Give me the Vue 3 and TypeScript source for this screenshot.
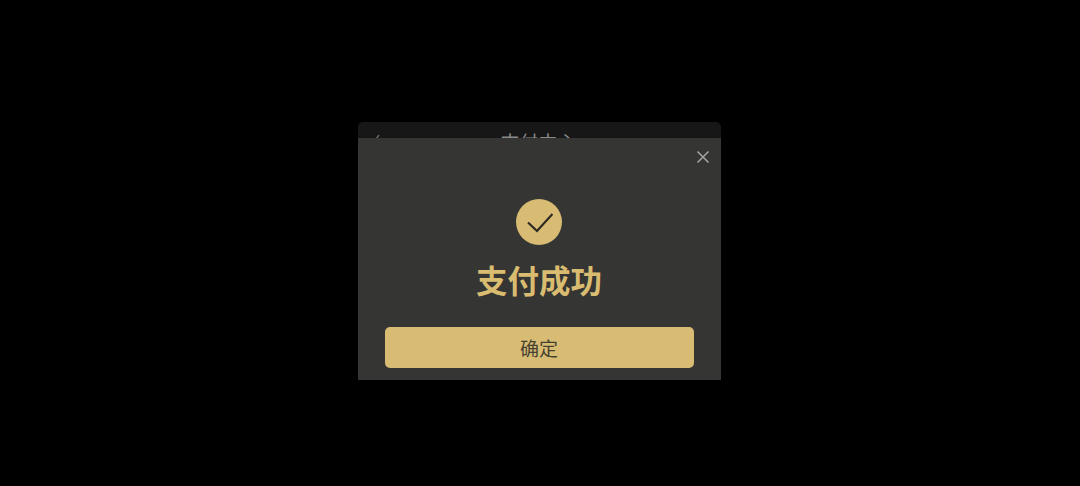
<script setup lang="ts">
const title: string = '支付成功'
</script>

<template>
  <div class="page">
    <div class="frame">
      <div class="nav">
        <svg class="back" width="12" height="24" viewBox="0 0 12 24"><path d="M8 7 L2 15 L8 23" fill="none" stroke="#6a6a6a" stroke-width="1.4" /></svg>
        <span class="nav-title">支付中心</span>
      </div>
      <div class="modal">
        <div class="close-row">
          <svg width="14" height="14" viewBox="0 0 14 14"><path d="M1.5 1.5 L12.5 12.5 M12.5 1.5 L1.5 12.5" stroke="#a6a6a4" stroke-width="1.5" fill="none" /></svg>
        </div>
        <div class="badge">
          <svg width="28" height="22" viewBox="0 0 28 22"><path d="M3 11.5 L12 20 L27.5 3" fill="none" stroke="#2d2a22" stroke-width="2.2" /></svg>
        </div>
        <div class="title">{{ title }}</div>
        <button class="confirm">确定</button>
      </div>
    </div>
  </div>
</template>

<style>
html, body { margin: 0; background: #000; }
</style>

<style scoped>
.page {
  width: 1080px;
  height: 486px;
  background: #000;
  padding: 122px 0 0 358px;
  box-sizing: border-box;
  font-family: "Liberation Sans", "Noto Sans CJK SC", sans-serif;
  overflow: hidden;
}
.frame {
  width: 363px;
  height: 258px;
  position: relative;
  overflow: hidden;
  border-radius: 5px 5px 0 0;
  background: #171717;
}
.nav {
  height: 40px;
  position: relative;
  display: flex;
  justify-content: center;
  align-items: flex-start;
  padding-top: 10px;
  box-sizing: border-box;
}
.back { position: absolute; left: 13px; top: 6px; }
.nav-title { font-size: 19px; line-height: 24px; color: #8a8a8a; margin-left: -2px; }
.modal {
  position: absolute;
  left: 0;
  right: 0;
  top: 16px;
  bottom: 0;
  background: #353534;
  display: flex;
  flex-direction: column;
  align-items: center;
}
.close-row {
  align-self: flex-end;
  padding: 12px 11px 0 0;
  height: 14px;
  display: flex;
}
.badge {
  width: 46px;
  height: 46px;
  margin-top: 35px;
  margin-left: -1px;
  border-radius: 50%;
  background: #d8bc74;
  display: flex;
  align-items: center;
  justify-content: center;
}
.title {
  margin-top: 17px;
  font-size: 31.5px;
  line-height: 40px;
  font-weight: 700;
  color: #d9bc70;
  margin-left: -1px;
}
.confirm {
  margin-top: 25px;
  width: 309px;
  height: 41px;
  margin-left: -1px;
  border: none;
  border-radius: 5px;
  background: #d8bc74;
  color: #464230;
  font-family: inherit;
  font-size: 19px;
  padding: 0;
}
</style>
